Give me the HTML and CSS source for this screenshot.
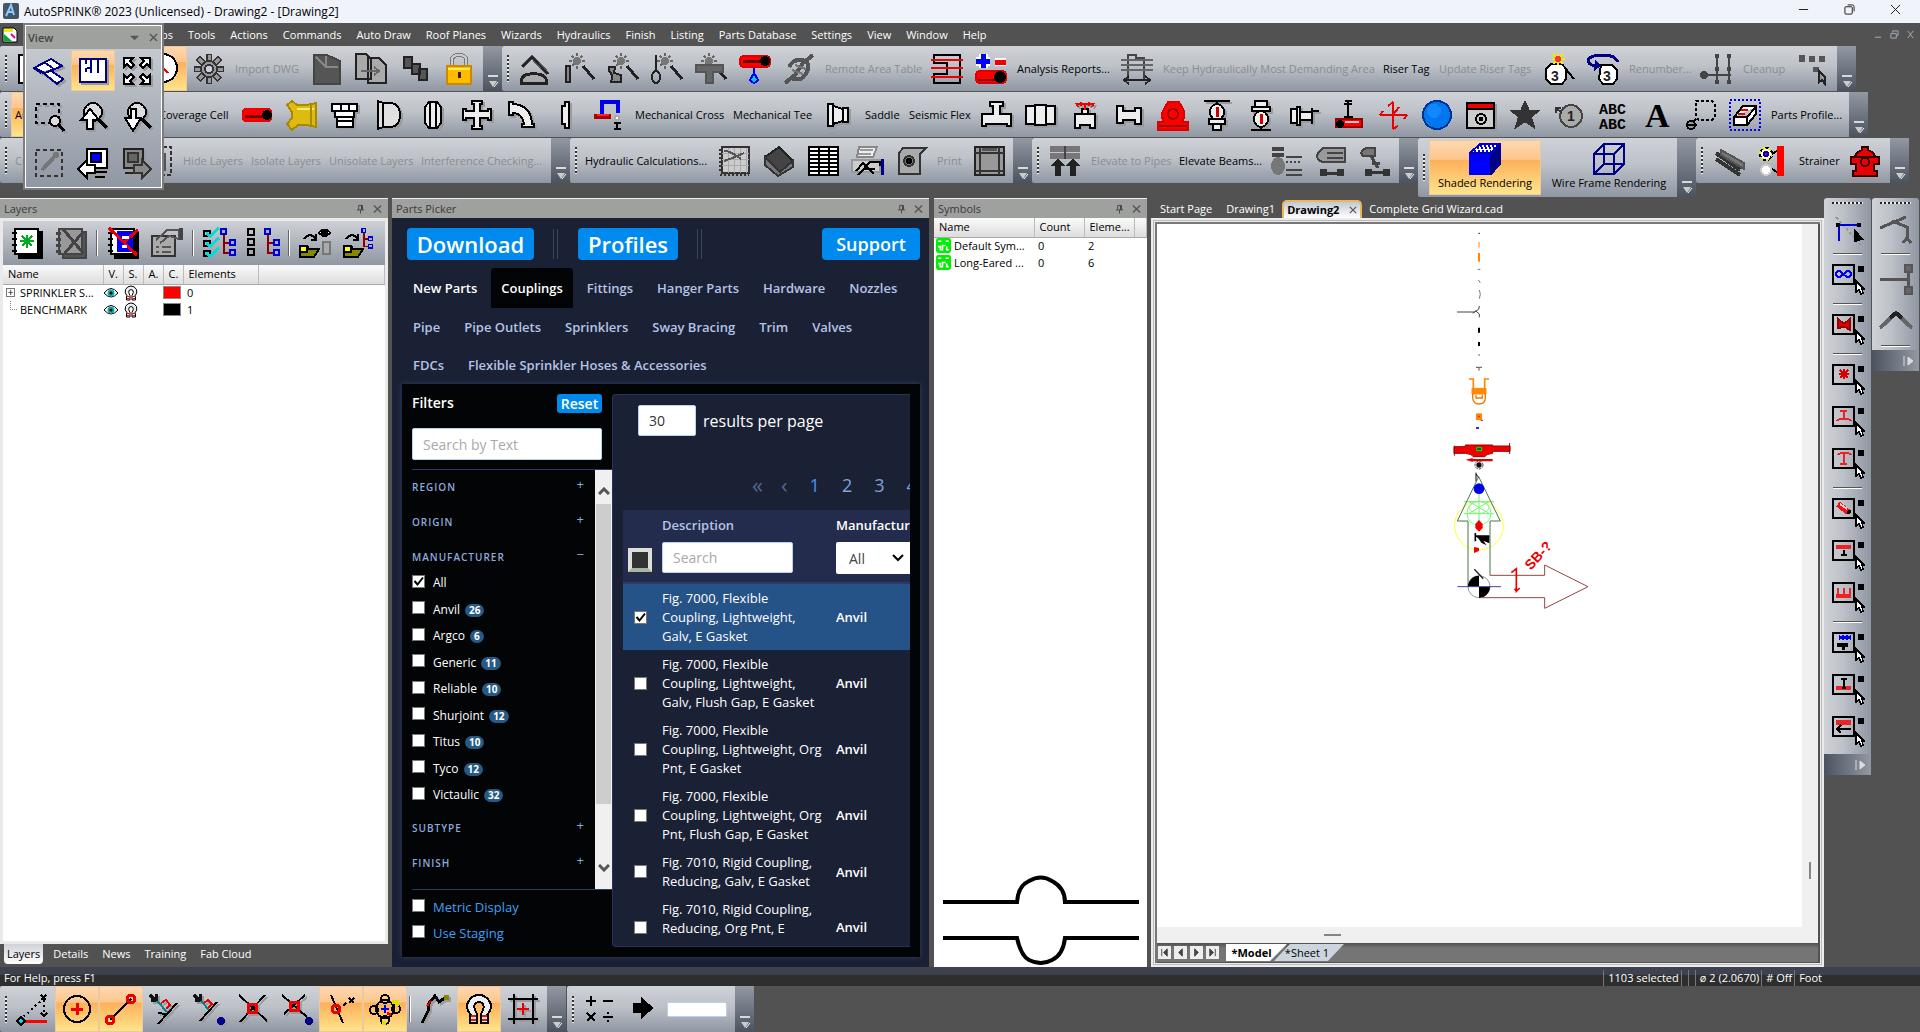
FILE: index.html
```html
<!DOCTYPE html>
<html lang="en">
<head>
<meta charset="utf-8">
<title>AutoSPRINK 2023 - Drawing2</title>
<link rel="stylesheet" href="styles.css">
</head>
<body>
<svg class="defs" aria-hidden="true">
  <symbol id="pin" viewBox="0 0 10 10"><path d="M3 1H7V6M3 1V6M1 6H9M5 6V10" fill="none" stroke="#444"/><path d="M6.5 1V6" stroke="#444" stroke-width="2"/></symbol>
  <symbol id="x" viewBox="0 0 10 10"><path d="M1 1L9 9M9 1L1 9" fill="none" stroke="#555" stroke-width="1.5"/></symbol>
  <symbol id="more" viewBox="0 0 12 14"><path d="M1 1H11" stroke="#fff" stroke-width="1.5"/><path d="M2 6H10L6 12Z" fill="#ccc"/><path d="M7 12L11 7" stroke="#fff"/></symbol>
  <symbol id="wand" viewBox="0 0 32 32"><g fill="none" stroke="#666"><circle cx="14" cy="8" r="4" fill="#777" stroke="none"/><path d="M14 0V3M14 13V16M6 8H9M19 8H22M9 3L11 5M19 3L17 5M9 13L11 11"/><path d="M20 13L31 26" stroke="#222" stroke-width="3"/></g></symbol>
  <symbol id="pick" viewBox="0 0 34 32"><path d="M2 2H23V21H2Z" fill="none" stroke="#000" stroke-width="2"/><path d="M27 3H33V9H27Z" fill="#000" stroke="none"/><path d="M25 18V29L28 27L30 31L32 30L31 26H33Z" fill="#fff" stroke="#000" stroke-width="1.5"/></symbol>
  <symbol id="eye" viewBox="0 0 16 12"><path d="M1 6Q8-3 15 6Q8 14 1 6Z" fill="#fff" stroke="#000"/><circle cx="8" cy="6" r="3.5" fill="#1aa"/><circle cx="8" cy="6" r="1.5"/></symbol>
  <symbol id="magnet" viewBox="0 0 32 32"><path d="M7 30V23H9Q2 16 5 9Q9 2 16 2Q23 2 27 9Q30 16 23 23H25V30H18V21Q22 15 20 11Q16 7 12 11Q10 15 14 21V30Z" fill="#eee" stroke="#000" stroke-width="2"/><path d="M8 23H13M19 23H24M8 27H13M19 27H24" stroke="#e11" stroke-width="2"/></symbol>
  <symbol id="tree" viewBox="0 0 16 32"><path d="M4 5V26H11M4 16H11" fill="none" stroke="#800" stroke-width="2"/><path d="M1 2H6V7H1ZM10 13H15V18H10ZM10 23H15V28H10Z" fill="#aaf" stroke="#00c" stroke-width="2"/></symbol>
  <symbol id="sym" viewBox="0 0 14 14"><rect width="14" height="14" rx="2" fill="#0e0"/><path d="M2 3H5M9 3H12M2 8H4V11H6V7H9M10 8V11H12" stroke="#fff" stroke-width="1.5" fill="none"/></symbol>
</svg>

<header class="titlebar">
  <svg class="appicon" viewBox="0 0 16 16"><rect width="16" height="16" rx="2" fill="#456"/><path d="M3 13L8 2L11 12M5 9H10" stroke="#8cf" stroke-width="2" fill="none"/></svg>
  <h1>AutoSPRINK® 2023 (Unlicensed) - Drawing2 - [Drawing2]</h1>
  <div class="winctl">
    <button aria-label="Minimize"><svg viewBox="0 0 12 12"><path d="M1 6H11"/></svg></button>
    <button aria-label="Restore"><svg viewBox="0 0 12 12"><rect x="1" y="3" width="8" height="8" rx="1"/><path d="M4 1H9Q11 1 11 3V8"/></svg></button>
    <button aria-label="Close"><svg viewBox="0 0 12 12"><path d="M1 1L11 11M11 1L1 11"/></svg></button>
  </div>
</header>

<nav class="menubar">
  <svg class="appicon" viewBox="0 0 16 16"><path d="M1 1H12L15 4V15H1Z" fill="#fff" stroke="#000"/><path d="M2 2H11V5H2Z" fill="#ee0"/><path d="M2 7V14H10Z" fill="#0a3"/><path d="M9 7L13 11" stroke="#d0a" stroke-width="2"/></svg>
  <button class="tucked">Snaps</button>
  <button>Tools</button><button>Actions</button><button>Commands</button><button>Auto Draw</button><button>Roof Planes</button><button>Wizards</button><button>Hydraulics</button><button>Finish</button><button>Listing</button><button>Parts Database</button><button>Settings</button><button>View</button><button>Window</button><button>Help</button>
  <div class="mdictl">
    <button aria-label="Minimize drawing"><svg viewBox="0 0 10 10"><path d="M1 8H8"/></svg></button>
    <button aria-label="Restore drawing"><svg viewBox="0 0 10 10"><path d="M1 4H7V9H1ZM3 3V1H9V6H8"/></svg></button>
    <button aria-label="Close drawing"><svg viewBox="0 0 10 10"><path d="M2 1L8 9M8 1L2 9"/></svg></button>
  </div>
</nav>

<section class="bars">
 <div class="barrow">
  <div class="bar"><i class="grip"></i>
   <button class="ib" aria-label="New"><svg viewBox="0 0 32 32"><path d="M2 2H28V30H2Z" fill="#fff"/></svg></button>
   <button class="ib" aria-label="Open"><svg viewBox="0 0 32 32"><path d="M2 8H28V28H2Z"/></svg></button>
   <button class="ib" aria-label="Save"><svg viewBox="0 0 32 32"><path d="M2 2H28V30H2Z"/></svg></button>
   <button class="ib on" aria-label="Angle"><svg viewBox="0 0 32 32"><circle cx="14" cy="15" r="14" fill="#fff"/><path d="M8 8L19 20" stroke="#e00"/></svg></button>
   <button class="ib" aria-label="Options"><svg viewBox="0 0 32 32"><g stroke="#333" stroke-width="6"><path d="M16 1V31M1 16H31M5 5L27 27M27 5L5 27"/></g><g stroke="#999" stroke-width="3"><path d="M16 2V30M2 16H30M6 6L26 26M26 6L6 26"/></g><circle cx="16" cy="16" r="8" fill="#999" stroke="#333"/><circle cx="16" cy="16" r="4" fill="#ccd" stroke="#333"/></svg></button>
   <button class="tx off w-74" disabled>Import DWG</button>
   <button class="ib" aria-label="Import"><svg viewBox="0 0 32 32"><path d="M3 2H16L29 8V31H3Z" fill="#555" stroke="#444"/><path d="M5 4L15 14L27 14M15 3V14" stroke="#888"/></svg></button>
   <button class="ib" aria-label="Copy"><svg viewBox="0 0 32 32"><path d="M1 1H11L16 6V26H1ZM13 5H24L31 12V30H13Z" fill="#aaa" stroke="#222"/><path d="M6 18H24M19 14L24 18L19 22" stroke="#666"/></svg></button>
   <button class="ib" aria-label="Cascade"><svg viewBox="0 0 32 32"><path d="M5 4H13V15H5ZM13 11H21V21H13ZM20 16H28V27H20Z" fill="#555" stroke="#222"/></svg></button>
   <button class="ib" aria-label="Lock"><svg viewBox="0 0 32 32"><path d="M9 14V7Q9 2 16 2Q23 2 23 7V14" stroke="#777" stroke-width="4"/><path d="M9 14V7Q9 2 16 2Q23 2 23 7V14" stroke="#ccc"/><rect x="4" y="13" width="24" height="18" fill="#fb0" stroke="#c80"/><path d="M5 16H27" stroke="#fe4"/><path d="M16 19V25" stroke="#320" stroke-width="3"/></svg></button>
   <button class="cap" aria-label="More"><svg><use href="#more"/></svg></button></div>
  <div class="bar"><i class="grip"></i>
   <button class="ib" aria-label="Spool"><svg viewBox="0 0 32 32"><path d="M3 14L13 4L29 21" stroke="#555" stroke-width="4"/><path d="M3 14L13 4L29 21" stroke="#222"/><path d="M2 30V27Q5 20 14 21Q24 20 27 26V30Z" fill="#aaa" stroke="#222" stroke-width="3"/></svg></button>
   <button class="ib" aria-label="Coupling wizard"><svg viewBox="0 0 32 32"><use href="#wand"/><path d="M3 13H7V29H3Z" fill="#888" stroke="#222"/></svg></button>
   <button class="ib" aria-label="Elbow wizard"><svg viewBox="0 0 32 32"><use href="#wand"/><path d="M2 14H8L7 20L14 22V29H4Q7 22 2 18Z" fill="#888" stroke="#222"/></svg></button>
   <button class="ib" aria-label="Hanger wizard"><svg viewBox="0 0 32 32"><use href="#wand"/><path d="M5 2V18" stroke="#222"/><ellipse cx="5" cy="24" rx="4" ry="6" stroke="#222"/></svg></button>
   <button class="ib" aria-label="Tee wizard"><svg viewBox="0 0 32 32"><use href="#wand"/><path d="M1 12H28V19H18V30H11V19H1Z" fill="#666" stroke="#555"/></svg></button>
   <button class="ib" aria-label="Drain pipe"><svg viewBox="0 0 32 32"><rect x="1" y="3" width="30" height="11" rx="4" fill="#f00" stroke="#d00"/><path d="M4 8H24" stroke="#600" stroke-width="3"/><circle cx="26" cy="8" r="4" fill="#000"/><path d="M15 15V20" stroke="#00f"/><path d="M15 20L19 27Q15 33 11 27Z" fill="#0cf" stroke="#00f"/></svg></button>
   <button class="ib" aria-label="Remote area"><svg viewBox="0 0 32 32"><path d="M2 30L12 22L20 10L30 2M6 14Q12 3 24 9Q28 18 18 26L9 26" stroke="#555" stroke-width="4"/><path d="M9 17L20 21M12 12L23 16" stroke="#777"/></svg></button>
   <button class="tx off w-104" disabled>Remote Area Table</button>
   <button class="ib" aria-label="Grid"><svg viewBox="0 0 32 32"><path d="M3 2H29V30H3V21H16V10H3Z"/><path d="M0 7H32M0 15H32M0 24H32" stroke="#e00"/></svg></button>
   <button class="ib" aria-label="Add and remove pipe"><svg viewBox="0 0 32 32"><path d="M8 1V15M1 8H15" stroke="#fff" stroke-width="9"/><path d="M8 1V15M1 8H15" stroke="#00f" stroke-width="5"/><path d="M20 9H31" stroke="#fff" stroke-width="8"/><path d="M20 9H31" stroke="#e00" stroke-width="5"/><rect x="1" y="18" width="30" height="12" rx="4" fill="#f00" stroke="#d00"/><path d="M3 27H22" stroke="#700"/><circle cx="25" cy="24" r="5" fill="#000"/></svg></button>
   <button class="tx w-102">Analysis Reports...</button>
   <button class="ib" aria-label="Demand area"><svg viewBox="0 0 32 32"><g stroke="#444"><path d="M7 1V28M23 5V28M7 2H15V5H24"/><path d="M0 7H32M0 12H32M0 17H32" stroke="#666"/><path d="M3 27H29M8 23L3 27L8 31M24 23L29 27L24 31" stroke="#222"/></g></svg></button>
   <button class="tx off w-220" disabled>Keep Hydraulically Most Demanding Area</button>
   <button class="tx w-56">Riser Tag</button>
   <button class="tx off w-102" disabled>Update Riser Tags</button>
   <button class="ib" aria-label="Number tag"><svg viewBox="0 0 32 32"><path d="M8 11H19L23 16V26L19 31H8L3 26V16Z" fill="#fff"/><text x="8" y="28" class="icot">3</text><path d="M15 0V12M9 6H22M10 1L20 11M20 1L10 11" stroke="#ee0"/><circle cx="15" cy="6" r="3" fill="#f33" stroke="none"/><path d="M22 15L31 26" /></svg></button>
   <button class="ib" aria-label="Repeat tag"><svg viewBox="0 0 32 32"><path d="M14 12H25L30 17V26L26 31H16L12 26Z" fill="#fff"/><text x="16" y="28" class="icot">3</text><path d="M31 9Q28 2 16 2Q2 2 1 8Q2 13 12 13" stroke="#008" stroke-width="3"/><path d="M8 7L14 13L7 18Z" fill="#008" stroke="none"/></svg></button>
   <button class="tx off w-70" disabled>Renumber...</button>
   <button class="ib" aria-label="Nodes"><svg viewBox="0 0 32 32"><g stroke="#444" stroke-width="1.5"><path d="M16 3V29M28 3V29M3 22H30"/><circle cx="3" cy="22" r="3" fill="#444"/><path d="M14 3H18M26 3H30M14 16H18M26 16H30M14 29H18M26 29H30" stroke-width="4"/></g></svg></button>
   <button class="tx off w-52" disabled>Cleanup</button>
   <button class="ib" aria-label="Filter selection"><svg viewBox="0 0 32 32"><g fill="#555" stroke="none"><path d="M2 2H8V9H2ZM12 3H18V9H12ZM22 3H28V9H22ZM16 14H22V19H16Z"/></g><path d="M22 18V29L25 27L28 31V24Z" fill="#999" stroke="#222"/></svg></button>
   <button class="cap" aria-label="More"><svg><use href="#more"/></svg></button></div>
 </div>

 <div class="barrow">
  <div class="bar"><i class="grip"></i>
   <button class="tx on w-144">Auto Coverage</button>
   <button class="tx w-80">Coverage Cell</button>
   <button class="ib" aria-label="Pipe"><svg viewBox="0 0 32 32"><rect x="2" y="10" width="28" height="12" rx="3" fill="#f00" stroke="#e00"/><path d="M4 17H24" stroke="#700" stroke-width="3"/><circle cx="26" cy="16" r="4" fill="#000"/></svg></button>
   <button class="ib" aria-label="Fitting"><svg viewBox="0 0 32 32"><path d="M2 6L7 2L12 6H22L31 4V28L22 26H13L7 31L2 25L7 19V13Z" fill="#db1" stroke="#a80"/><path d="M12 10H29" stroke="#fe6"/><path d="M26 5V27" stroke="#a80"/></svg></button>
   <button class="ib s" aria-label="Adapter"><svg viewBox="0 0 32 32"><path d="M3 5H28V12H3ZM6 12H25V18H6ZM8 18H24V28H8ZM12 5V12M20 5V12M8 22H24" fill="#fff"/></svg></button>
   <button class="ib s" aria-label="Cap"><svg viewBox="0 0 32 32"><path d="M5 2V30L10 28H19Q27 26 27 16Q27 6 19 4H10ZM10 4V28" fill="#e0e0e0"/></svg></button>
   <button class="ib s" aria-label="Coupling"><svg viewBox="0 0 32 32"><path d="M12 3H20L24 8V24L20 29H12L8 24V8ZM13 4V28M19 4V28" fill="#eee"/></svg></button>
   <button class="ib s" aria-label="Cross"><svg viewBox="0 0 32 32"><path d="M11 2H21V5H19V12H27V10H30V21H27V19H19V27H21V30H11V27H13V19H5V21H2V10H5V12H13V5H11Z" fill="#eee"/></svg></button>
   <button class="ib s" aria-label="Elbow"><svg viewBox="0 0 32 32"><path d="M4 3H8V5Q26 6 27 25H29V28H17V25H19Q17 14 8 14V16H4Z" fill="#eee"/></svg></button>
   <button class="ib s" aria-label="Flange"><svg viewBox="0 0 32 32"><path d="M16 3H20V29H16V25H13V7H16Z" fill="#eee"/></svg></button>
   <button class="ib" aria-label="Flexible drop"><svg viewBox="0 0 32 32"><path d="M9 16V3H25V14" stroke="#00e" stroke-width="4"/><path d="M1 17H18" stroke="#a00" stroke-width="5"/><path d="M4 16H16" stroke="#f22"/><circle cx="24" cy="19" r="2" fill="#fff" stroke="#aaa"/><path d="M21 30H28M24 23V30M21 24H28"/></svg></button>
   <button class="tx w-98">Mechanical Cross</button><button class="tx w-88">Mechanical Tee</button>
   <button class="ib s" aria-label="Reducer"><svg viewBox="0 0 32 32"><path d="M5 5H10V27H5ZM10 7L20 10V22L10 25ZM20 9H25V23H20Z" fill="#eee"/></svg></button>
   <button class="tx w-44">Saddle</button><button class="tx w-70">Seismic Flex</button>
   <button class="ib s" aria-label="Tee"><svg viewBox="0 0 32 32"><path d="M9 3H22V7H19V15H30V27H26V25H5V27H1V15H12V7H9Z" fill="#eee"/></svg></button>
   <button class="ib s" aria-label="Union"><svg viewBox="0 0 32 32"><path d="M1 7H10V25H1ZM10 6H21V26H10ZM21 7H30V25H21Z" fill="#eee"/></svg></button>
   <button class="ib s" aria-label="Valve"><svg viewBox="0 0 32 32"><path d="M6 15H26V29H21V26H11V29H6ZM13 10H19V15H13Z" fill="#eee"/><path d="M7 5H25M16 5V11" stroke="#e00"/><path d="M7 4L9 8M12 3V7M20 3V7M25 4L23 8" stroke="#e00"/></svg></button>
   <button class="ib s" aria-label="Nipple"><svg viewBox="0 0 32 32"><path d="M4 7H10V12H22V9H28V25H22V21H10V24H4Z" fill="#eee"/></svg></button>
   <button class="ib" aria-label="Pump"><svg viewBox="0 0 32 32"><path d="M11 3H22L26 10Q29 16 25 23H31V31H1V23H7Q3 16 7 10Z" fill="#f00" stroke="#d00"/><circle cx="16" cy="15" r="5" stroke="#900"/><path d="M2 27H30" stroke="#900"/></svg></button>
   <button class="ib s" aria-label="Upright sprinkler"><svg viewBox="0 0 32 32"><path d="M3 2H29M16 2V6"/><ellipse cx="16" cy="13" rx="7" ry="8" fill="#eee"/><path d="M16 8V18" stroke="#c00" stroke-width="3"/><path d="M8 20H24V25H8ZM12 25H20V31H12Z" fill="#eee"/></svg></button>
   <button class="ib s" aria-label="Pendent sprinkler"><svg viewBox="0 0 32 32"><path d="M10 2H22V8H10ZM7 8H25V12H7Z" fill="#eee"/><ellipse cx="16" cy="20" rx="7" ry="8" fill="#eee"/><path d="M16 15V25" stroke="#c00" stroke-width="3"/><path d="M6 31H26M16 28V31"/></svg></button>
   <button class="ib s" aria-label="Sidewall sprinkler"><svg viewBox="0 0 32 32"><path d="M2 10H8V24H2ZM8 8H11V26H8ZM11 13H23V21H11ZM23 9V25M23 12H30" fill="#eee"/></svg></button>
   <button class="ib" aria-label="Hanger"><svg viewBox="0 0 32 32"><path d="M12 2H19M15 2V17"/><path d="M11 5H19"/><path d="M3 20H29V28H3Z" fill="#f00" stroke="#900"/><path d="M12 23H26" stroke="#fcc"/><path d="M11 18H20"/><circle cx="7" cy="25" r="3" fill="#000"/></svg></button>
   <button class="ib" aria-label="Gridlines"><svg viewBox="0 0 32 32"><path d="M16 3V30M3 16H30M11 7L16 3M21 27L16 30M6 12L3 16M27 20L30 16M16 16L22 8" stroke="#e00"/></svg></button>
   <button class="ib" aria-label="Sphere"><svg viewBox="0 0 32 32"><circle cx="16" cy="16" r="14" fill="#07e" stroke="#039"/><circle cx="13" cy="12" r="7" fill="#18f" stroke="none"/></svg></button>
   <button class="ib s" aria-label="Title block"><svg viewBox="0 0 32 32"><path d="M2 4H29V29H2Z" fill="#ccc"/><path d="M3 7H28" stroke="#e00" stroke-width="5"/><path d="M2 10H29"/><circle cx="16" cy="20" r="5"/><circle cx="16" cy="20" r="1.5" fill="#000"/></svg></button>
   <button class="ib" aria-label="Star"><svg viewBox="0 0 32 32"><path d="M16 3L20 12H29L22 18L25 28L16 22L7 28L10 18L3 12H12Z" fill="#333" stroke="#333"/></svg></button>
   <button class="ib" aria-label="Callout"><svg viewBox="0 0 32 32"><circle cx="18" cy="17" r="11" fill="#aaa" stroke="#444"/><text x="14" y="22" class="icot">1</text><path d="M2 9H8M3 8V14M3 9L9 14" stroke="#333"/></svg></button>
   <button class="ib" aria-label="Text"><svg viewBox="0 0 32 32"><text x="2" y="15" class="icom">ABC</text><text x="2" y="30" class="icom">ABC</text></svg></button>
   <button class="ib" aria-label="Letter"><svg viewBox="0 0 32 32"><text x="4" y="28" class="icoa">A</text></svg></button>
   <button class="ib" aria-label="Tag area"><svg viewBox="0 0 32 32"><path d="M11 2H27L30 6V18L27 21H14L11 18Z" stroke-dasharray="3 2"/><path d="M11 20L7 24" /><circle cx="6" cy="26" r="4" fill="#999"/><path d="M1 26H12"/></svg></button>
   <button class="ib" aria-label="Box"><svg viewBox="0 0 32 32"><path d="M1 1H31V31H1Z" stroke="#00e" stroke-dasharray="2 2"/><path d="M5 18L14 7H27V15L18 26H5ZM5 18H18L27 8M18 18V26" fill="#fff"/><path d="M12 11H19M9 15H16" stroke="#e00"/></svg></button>
   <button class="tx w-82">Parts Profile...</button>
   <button class="cap" aria-label="More"><svg><use href="#more"/></svg></button></div>
 </div>

 <div class="barrow">
  <div class="bar"><i class="grip"></i>
   <button class="tx off w-124" disabled>Create Layer</button>
   <button class="ib" aria-label="Layer selection"><svg viewBox="0 0 32 32"><path d="M4 2H30V30H4Z" stroke="#333" stroke-dasharray="4 2"/><path d="M14 8V26M22 8V26" stroke="#555" stroke-width="5"/></svg></button>
   <button class="tx off w-68" disabled>Hide Layers</button><button class="tx off w-78" disabled>Isolate Layers</button><button class="tx off w-92" disabled>Unisolate Layers</button><button class="tx off w-134" disabled>Interference Checking...</button>
   <button class="cap" aria-label="More"><svg><use href="#more"/></svg></button></div>
  <div class="bar"><i class="grip"></i>
   <button class="tx w-132">Hydraulic Calculations...</button>
   <button class="ib" aria-label="Graph"><svg viewBox="0 0 32 32"><path d="M3 2H30V28H3Z" fill="#ccc" stroke="#333"/><path d="M9 3V28M15 3V28M21 3V28M27 3V28M3 8H30M3 14H30M3 20H30" stroke="#aaa" stroke-width="1"/><path d="M5 6Q12 6 22 14M5 16L16 12L25 8" stroke="#555"/><path d="M1 30H30M1 4V28" stroke="#333" stroke-dasharray="2 2"/></svg></button>
   <button class="ib" aria-label="Book"><svg viewBox="0 0 32 32"><path d="M2 12L16 2L30 16L17 29Z" fill="#444" stroke="#222"/><path d="M2 12V20L15 31L30 22V16L17 27Z" fill="#777" stroke="#333"/></svg></button>
   <button class="ib" aria-label="Table"><svg viewBox="0 0 32 32"><path d="M2 2H31V30H2Z" fill="#fff"/><path d="M2 6H31M2 10H31M2 14H31M2 18H31M2 22H31M2 26H31M12 2V30M22 2V30"/></svg></button>
   <button class="ib" aria-label="Preview"><svg viewBox="0 0 32 32"><path d="M8 2H26L22 12H6Z" fill="#eee" stroke="#888"/><path d="M1 15H29V27H1Z" fill="#ccc" stroke="#999"/><path d="M9 5H22M8 9H20" stroke="#999"/><path d="M5 26L12 18L23 29M7 30L19 17H29V21M12 24H24" /><path d="M31 14V30" stroke="#008" stroke-width="3"/></svg></button>
   <button class="ib" aria-label="Sheet"><svg viewBox="0 0 32 32"><path d="M8 3H31L25 9V29H4V8Z" fill="#aaa" stroke="#333"/><circle cx="14" cy="16" r="5" fill="#777" stroke="#333"/><circle cx="14" cy="16" r="2" fill="#111"/></svg></button>
   <button class="tx off w-34" disabled>Print</button>
   <button class="ib" aria-label="Layout"><svg viewBox="0 0 32 32"><path d="M2 2H31V30H2Z" fill="#999" stroke="#222"/><path d="M2 8H31M2 26H31M7 2V30M26 2V30" stroke="#333"/><path d="M9 4H24" stroke="#555" stroke-width="3"/></svg></button>
   <button class="cap" aria-label="More"><svg><use href="#more"/></svg></button></div>
  <div class="bar"><i class="grip"></i>
   <button class="ib" aria-label="Elevate"><svg viewBox="0 0 32 32"><path d="M1 4H31M1 11H31" stroke="#777" stroke-width="6"/><path d="M16 1V14" stroke="#444"/><path d="M9 31V20M24 31V20" stroke="#222" stroke-width="6"/><path d="M2 21L9 13L16 21ZM17 21L24 13L31 21Z" fill="#222" stroke="none"/></svg></button>
   <button class="tx off w-88" disabled>Elevate to Pipes</button><button class="tx w-90">Elevate Beams...</button>
   <button class="ib" aria-label="Beam"><svg viewBox="0 0 32 32"><path d="M1 4H13M1 10H13" stroke="#444" stroke-width="4"/><ellipse cx="7" cy="21" rx="6" ry="8" fill="#777" stroke="#777"/><path d="M15 12H31M15 25H31M15 30H31" stroke="#444"/><path d="M15 17H31" stroke="#444" stroke-dasharray="2 2"/></svg></button>
   <button class="ib" aria-label="Attach"><svg viewBox="0 0 32 32"><path d="M8 3H30V17H8Q0 15 3 8ZM12 8H28M12 13H28" fill="#999" stroke="#444"/><path d="M6 28H26" stroke="#333" stroke-width="3"/><path d="M5 24H12V31H5ZM22 24H29V31H22Z" fill="#333" stroke="none"/></svg></button>
   <button class="ib" aria-label="Lower"><svg viewBox="0 0 32 32"><path d="M2 8Q4 2 12 3H16V11H4Z" fill="#777" stroke="#444"/><path d="M12 11L19 23M13 18L21 18" stroke="#444" stroke-width="3"/><path d="M8 27H30" stroke="#333" stroke-width="3"/><path d="M6 24H13V31H6ZM24 24H31V31H24Z" fill="#333" stroke="none"/></svg></button>
   <button class="cap" aria-label="More"><svg><use href="#more"/></svg></button></div>
  <div class="bar tall"><i class="grip"></i>
   <button class="stack on w-112"><svg viewBox="0 0 32 32"><path d="M1 11H22V31H1Z" fill="#00f" stroke="#00f"/><path d="M22 11L31 1V21L22 31Z" fill="#008" stroke="#008"/><path d="M1 10L11 1H31L22 10Z" fill="#fff" stroke="#00c"/><path d="M5 8H22M8 5H26M11 3H29" stroke="#00c" stroke-dasharray="2 2"/></svg><span>Shaded Rendering</span></button>
   <button class="stack w-136"><svg viewBox="0 0 32 32"><path d="M1 11H21V31H1ZM11 1H31V21H11ZM1 11L11 1M21 11L31 1M1 31L11 21M21 31L31 21" stroke="#008"/></svg><span>Wire Frame Rendering</span></button>
   <button class="cap" aria-label="More"><svg><use href="#more"/></svg></button></div>
  <div class="bar"><i class="grip"></i>
   <button class="ib" aria-label="Steel"><svg viewBox="0 0 32 32"><path d="M3 8L27 25M3 14L27 30" stroke="#333" stroke-width="4"/><path d="M8 5L31 18V24L8 10Z" fill="#777" stroke="#555"/></svg></button>
   <button class="ib" aria-label="Bell"><svg viewBox="0 0 32 32"><circle cx="9" cy="9" r="6" fill="#fff" stroke="#000"/><circle cx="9" cy="9" r="6" stroke="#ee0" stroke-dasharray="3 3"/><circle cx="9" cy="9" r="2" fill="#e00" stroke="#00c"/><path d="M15 9L20 6M15 24L20 27" /><circle cx="9" cy="25" r="5" fill="#fff" stroke="#ccc"/><path d="M23 1V31" stroke="#f00" stroke-width="7"/></svg></button>
   <button class="tx w-48">Strainer</button>
   <button class="ib" aria-label="Hydrant"><svg viewBox="0 0 32 32"><path d="M13 2H19V5Q25 7 26 12H30V19H25V26H28V31H4V26H7V19H2V12H6Q7 7 13 5Z" fill="#e00" stroke="#300"/><circle cx="16" cy="17" r="4" stroke="#300"/><path d="M6 12H26" stroke="#300"/></svg></button>
   <button class="cap wide" aria-label="More"><svg><use href="#more"/></svg></button></div>
 </div>
</section>

<main class="work">
 <section class="leftdock">
  <div class="panel layers">
   <div class="phead"><span>Layers</span><svg><use href="#pin"/></svg><svg><use href="#x"/></svg></div>
   <div class="pbody">
    <div class="ltools">
     <button aria-label="New layer"><svg viewBox="0 0 32 32"><path d="M8 5H31V31H8Z" fill="#000"/><path d="M4 2H27V27H4Z" fill="#fff"/><path d="M1 6H6M1 12H6M1 18H6M1 24H6" /><path d="M16 8V21M9 14H23M11 9L21 19M21 9L11 19" stroke="#0a2"/></svg></button>
     <button aria-label="Delete layer"><svg viewBox="0 0 32 32"><path d="M8 5H31V31H8Z" fill="#555" stroke="#444"/><path d="M4 2H27V27H4Z" fill="#999" stroke="#444"/><path d="M1 6H6M1 12H6M1 18H6M1 24H6M8 2L28 26M29 4L10 26" stroke="#444" stroke-width="3"/></svg></button>
     <i class="vs"></i>
     <button aria-label="Delete empty layers"><svg viewBox="0 0 32 32"><path d="M8 5H31V31H8Z" fill="#000"/><path d="M4 2H27V27H4Z" fill="#fff"/><path d="M1 6H6M1 12H6M1 18H6M1 24H6"/><path d="M10 4H26V25H10Z" fill="#00f" stroke="none"/><path d="M2 1L30 28M31 3L17 15" stroke="#e00" stroke-width="3"/><path d="M15 10H22M15 19H20" stroke="#fff" stroke-width="3"/></svg></button>
     <button aria-label="Layer properties"><svg viewBox="0 0 32 32"><path d="M1 9H24V29H1Z" fill="#aaa" stroke="#333"/><path d="M5 13L13 6L16 3H28V12L18 9L9 16M5 20H8M11 20H20M5 25H8M11 25H20" stroke="#555"/><path d="M30 1V13" stroke="#444" stroke-width="4"/></svg></button>
     <i class="vs"></i>
     <button aria-label="Check all"><svg viewBox="0 0 32 32"><path d="M1 4H7V9H1ZM1 14H7V19H1ZM1 24H7V29H1Z"/><path d="M3 6L7 9L16 1M3 16L7 19L16 11M3 26L7 29L16 21" stroke="#0dd" stroke-width="3"/><use href="#tree" x="17" width="16" height="32"/></svg></button>
     <button aria-label="Uncheck all"><svg viewBox="0 0 32 32"><path d="M1 2H7V8H1ZM1 12H7V18H1ZM1 22H7V28H1Z"/><use href="#tree" x="17" width="16" height="32"/></svg></button>
     <i class="vs"></i>
     <button aria-label="Load view"><svg viewBox="0 0 32 32"><path d="M5 12Q11 4 17 12M17 7V13H12"/><path d="M1 19H8L10 22H20L15 30H1Z" fill="#880"/><path d="M1 19L8 19V25H1Z" fill="#ff0"/><use href="#eye" x="19" y="1" width="13" height="10"/><path d="M24 15H31V27H24Z" fill="#aaa" stroke="#777"/></svg></button>
     <button aria-label="Load tree"><svg viewBox="0 0 32 32"><path d="M3 12Q9 4 15 12M15 7V13H10"/><path d="M1 19H8L10 22H20L15 30H1Z" fill="#880"/><path d="M1 19L8 19V25H1Z" fill="#ff0"/><use href="#tree" x="17" y="0" width="14" height="24"/></svg></button>
    </div>
    <table class="list">
     <colgroup><col class="c100"><col class="c20"><col class="c20"><col class="c20"><col class="c20"><col class="c75"><col></colgroup>
     <thead><tr><th>Name</th><th>V.</th><th>S.</th><th>A.</th><th>C.</th><th>Elements</th><th></th></tr></thead>
     <tbody>
      <tr><td><span class="node"><i class="plus">+</i>SPRINKLER S...</span></td><td><svg class="e"><use href="#eye"/></svg></td><td><svg class="m"><use href="#magnet"/></svg></td><td></td><td><i class="sw red"></i></td><td>0</td><td></td></tr>
      <tr><td><span class="node"><i class="leaf"></i>BENCHMARK</span></td><td><svg class="e"><use href="#eye"/></svg></td><td><svg class="m"><use href="#magnet"/></svg></td><td></td><td><i class="sw"></i></td><td>1</td><td></td></tr>
     </tbody>
    </table>
   </div>
  </div>
  <div class="ptabs"><button class="cur">Layers</button><button>Details</button><button>News</button><button>Training</button><button>Fab Cloud</button></div>
 </section>

 <section class="picker">
  <div class="phead"><span>Parts Picker</span><svg><use href="#pin"/></svg><svg><use href="#x"/></svg></div>
  <div class="pk">
   <div class="pktop"><button class="big w-127">Download</button><i class="dbl"></i><button class="big w-100">Profiles</button><i class="dbl"></i><button class="big sup w-98">Support</button></div>
   <nav class="cats">
    <div><a href="#" class="new">New Parts</a><a href="#" class="cur">Couplings</a><a href="#">Fittings</a><a href="#">Hanger Parts</a><a href="#">Hardware</a><a href="#">Nozzles</a></div>
    <div><a href="#">Pipe</a><a href="#">Pipe Outlets</a><a href="#">Sprinklers</a><a href="#">Sway Bracing</a><a href="#">Trim</a><a href="#">Valves</a></div>
    <div><a href="#">FDCs</a><a href="#">Flexible Sprinkler Hoses &amp; Accessories</a></div>
   </nav>
   <div class="box">
    <aside class="filters">
     <div class="fh"><h2>Filters</h2><button class="reset">Reset</button></div>
     <input class="ftext" type="text" placeholder="Search by Text" aria-label="Search by Text">
     <div class="fscroll">
      <div class="fl">
       <button class="grp">REGION<span>+</span></button>
       <button class="grp">ORIGIN<span>+</span></button>
       <button class="grp">MANUFACTURER<span>−</span></button>
       <div class="mf">
        <label><input type="checkbox" checked>All</label>
        <label><input type="checkbox">Anvil<b>26</b></label>
        <label><input type="checkbox">Argco<b>6</b></label>
        <label><input type="checkbox">Generic<b>11</b></label>
        <label><input type="checkbox">Reliable<b>10</b></label>
        <label><input type="checkbox">Shurjoint<b>12</b></label>
        <label><input type="checkbox">Titus<b>10</b></label>
        <label><input type="checkbox">Tyco<b>12</b></label>
        <label><input type="checkbox">Victaulic<b>32</b></label>
       </div>
       <button class="grp">SUBTYPE<span>+</span></button>
       <button class="grp">FINISH<span>+</span></button>
      </div>
      <div class="sb"><svg viewBox="0 0 12 8"><path d="M1 7L6 2L11 7"/></svg><i></i><svg viewBox="0 0 12 8"><path d="M1 1L6 6L11 1"/></svg></div>
     </div>
     <div class="ff"><label><input type="checkbox">Metric Display</label><label><input type="checkbox">Use Staging</label></div>
    </aside>
    <section class="results"><div class="clip">
     <div class="rpp"><input id="rpp" type="text" value="30"><label for="rpp">results per page</label></div>
     <div class="pages"><a href="#" class="dim">«</a><a href="#" class="dim">‹</a><a href="#" class="cur">1</a><a href="#">2</a><a href="#">3</a><a href="#">4</a></div>
     <table class="parts">
      <colgroup><col class="k1"><col class="k2"><col class="k3"></colgroup>
      <thead><tr><th><button class="all" aria-label="Toggle all"></button></th><th><label for="ds">Description</label><input id="ds" type="text" placeholder="Search"></th><th class="w"><label for="ms">Manufacturer</label><select id="ms"><option>All</option></select></th></tr></thead>
      <tbody>
       <tr class="sel"><td><input type="checkbox" checked aria-label="Select"></td><td>Fig. 7000, Flexible Coupling, Lightweight, Galv, E Gasket</td><td>Anvil</td></tr>
       <tr><td><input type="checkbox" aria-label="Select"></td><td>Fig. 7000, Flexible Coupling, Lightweight, Galv, Flush Gap, E Gasket</td><td>Anvil</td></tr>
       <tr><td><input type="checkbox" aria-label="Select"></td><td>Fig. 7000, Flexible Coupling, Lightweight, Org Pnt, E Gasket</td><td>Anvil</td></tr>
       <tr><td><input type="checkbox" aria-label="Select"></td><td>Fig. 7000, Flexible Coupling, Lightweight, Org Pnt, Flush Gap, E Gasket</td><td>Anvil</td></tr>
       <tr><td><input type="checkbox" aria-label="Select"></td><td>Fig. 7010, Rigid Coupling, Reducing, Galv, E Gasket</td><td>Anvil</td></tr>
       <tr class="cut"><td><input type="checkbox" aria-label="Select"></td><td>Fig. 7010, Rigid Coupling, Reducing, Org Pnt, E</td><td>Anvil</td></tr>
      </tbody>
     </table>
    </div></section>
   </div>
  </div>
 </section>

 <section class="symbols">
  <div class="phead"><span>Symbols</span><svg><use href="#pin"/></svg><svg><use href="#x"/></svg></div>
  <table class="list">
   <colgroup><col class="c100"><col class="c50"><col class="c50"><col></colgroup>
   <thead><tr><th>Name</th><th>Count</th><th>Eleme...</th><th></th></tr></thead>
   <tbody>
    <tr><td><span class="node"><svg class="sy"><use href="#sym"/></svg>Default Sym...</span></td><td>0</td><td>2</td><td></td></tr>
    <tr><td><span class="node"><svg class="sy"><use href="#sym"/></svg>Long-Eared ...</span></td><td>0</td><td>6</td><td></td></tr>
   </tbody>
  </table>
  <svg class="shape" viewBox="0 0 196 90"><path d="M0 27H74Q75 11 86 6Q98-1 109 6Q122 13 122 27H196M0 63H74Q78 81 86 85Q98 91 109 85Q120 80 122 63H196" fill="none" stroke="#000" stroke-width="4"/></svg>
 </section>

 <section class="doc">
  <div class="dtabs"><button>Start Page</button><button>Drawing1</button><button class="cur">Drawing2 <svg><use href="#x"/></svg></button><button>Complete Grid Wizard.cad</button></div>
  <div class="frame">
   <div class="canvas">
    <div class="paper">
     <svg class="dwg" viewBox="0 0 600 1200"><g fill="none" stroke-width="3">
      <path d="M175 40H180" stroke="#333"/><path d="M177 66V83" stroke="#f80"/><path d="M177 99V125" stroke="#f80" stroke-width="6"/>
      <path d="M173 148H181M175 180L181 188M178 210Q184 222 178 236" stroke="#777"/>
      <path d="M111 276H165M178 258L176 268L158 280M166 272L178 282V292" stroke="#444"/>
      <path d="M177 323V338M177 366V378" stroke="#000" stroke-width="6"/><path d="M175 405H180M168 442H186M177 442V452" stroke="#555"/>
      <path d="M147 477H160V505M207 477H194V505" stroke="#f80" stroke-width="5"/><path d="M156 505H198V522H156Z" fill="#f80" stroke="#f80"/><path d="M158 522V534Q160 552 177 552Q195 552 196 534V522M168 525V534H187V525" stroke="#e70" stroke-width="4"/>
      <path d="M168 580H186V600H168Z" fill="#f80" stroke="none"/><path d="M175 589H180M182 601H189" stroke="#e00"/><path d="M168 624H177" stroke="#00e" stroke-width="5"/>
      <path d="M102 680H136V675H218V678H270V694H218V700Q198 702 194 710H160Q156 702 136 700H102Z" fill="#e00" stroke="#900"/><path d="M103 677V707M269 669V702" stroke="#900"/><path d="M170 683H185V692H170Z" fill="#050" stroke="#0e2"/>
      <path d="M137 719L158 714V717H218V724H158V726Z" fill="#d00" stroke="none"/><circle cx="177" cy="735" r="12" stroke="#444" stroke-dasharray="8 3"/><circle cx="177" cy="735" r="8" fill="#111"/>
      <path d="M168 758V784M168 762L177 774" stroke="#000"/>
      <circle cx="177" cy="917" r="73" stroke="#ff3"/><circle cx="177" cy="880" r="36" stroke="#6f6"/><ellipse cx="177" cy="862" rx="30" ry="18" stroke="#8f8"/><path d="M132 845H222M132 881H222M177 820V930M147 845L207 880M207 845L147 880" stroke="#7e7"/>
      <path d="M176 770L112 903H144V1100M176 770L241 903H210V1066" stroke="#474"/>
      <path d="M210 1066H374V1035L504 1100L374 1165V1133H177" stroke="#944"/>
      <circle cx="177" cy="1100" r="33" fill="#fff" stroke="#999"/><path d="M177 1100V1067A33 33 0 0 0 144 1100ZM177 1100V1133A33 33 0 0 0 210 1100Z" fill="#000"/>
      <path d="M112 1100H243" stroke="#449"/><path d="M163 1048L190 1076" stroke="#222" stroke-width="4"/>
      <circle cx="177" cy="806" r="16" fill="#00e"/><path d="M177 900L188 912V924L177 935L166 924V912Z" fill="#e00"/><path d="M162 981L177 984V993L162 999Z" fill="#e00"/>
      <path d="M166 939V964M166 948H208" stroke="#000" stroke-width="5"/><path d="M166 948H208V970L190 962L200 976L184 968L176 956Z" fill="#000"/>
      <path d="M274 1058L289 1046V1114L299 1104M289 1114L284 1106" stroke="#e00" stroke-width="5"/>
      <text x="332" y="1052" transform="rotate(-47 332 1052)" class="sb2">SB-?</text></g></svg>
    </div>
    <div class="vscroll"><i></i></div>
   </div>
   <div class="hscroll"><i></i></div>
   <div class="sheets">
    <button class="nv" aria-label="First"><svg viewBox="0 0 12 12"><path d="M3 2V10"/><path d="M9 2V10L5 6Z"/></svg></button>
    <button class="nv" aria-label="Previous"><svg viewBox="0 0 12 12"><path d="M8 2V10L4 6Z"/></svg></button>
    <button class="nv" aria-label="Next"><svg viewBox="0 0 12 12"><path d="M4 2V10L8 6Z"/></svg></button>
    <button class="nv" aria-label="Last"><svg viewBox="0 0 12 12"><path d="M3 2V10L7 6Z"/><path d="M9 2V10"/></svg></button>
    <button class="sh cur">*Model</button><button class="sh two">*Sheet 1</button>
   </div>
  </div>
 </section>

 <section class="vbars">
  <div class="vbar"><i class="hgrip"></i>
   <button aria-label="Select line"><svg viewBox="0 0 34 32"><path d="M5 4L30 32" stroke="#999" stroke-dasharray="3 2"/><path d="M8 28V12H27" stroke="#00d"/><path d="M5 10H9V14H5ZM26 10H30V14H26Z" fill="#000" stroke="none"/><path d="M24 18V28L31 26Z" fill="#000"/></svg></button><hr>
   <button aria-label="Pick loop"><svg viewBox="0 0 34 32"><use href="#pick"/><path d="M12 11L9 8Q5 8 5 11Q5 14 9 14L16 8Q20 8 20 11Q20 14 16 14Z" stroke="#00e"/></svg></button><hr>
   <button aria-label="Pick valve"><svg viewBox="0 0 34 32"><use href="#pick"/><path d="M7 6L12 10H14L19 6V17L14 14H12L7 15Z" fill="#d00" stroke="#900"/></svg></button><hr>
   <button aria-label="Pick sprinkler"><svg viewBox="0 0 34 32"><use href="#pick"/><path d="M13 6V16M8 11H18M9 7L17 15M17 7L9 15" stroke="#d00"/></svg></button>
   <button aria-label="Pick upright"><svg viewBox="0 0 34 32"><use href="#pick"/><path d="M9 6H16M13 6V15M6 16Q7 14 12 14H15Q19 14 20 16" stroke="#e22"/></svg></button>
   <button aria-label="Pick pendent"><svg viewBox="0 0 34 32"><use href="#pick"/><path d="M6 8Q8 6 12 6H15Q19 6 20 8M13 6V16M9 17H16" stroke="#e22"/></svg></button><hr>
   <button aria-label="Pick pipe"><svg viewBox="0 0 34 32"><use href="#pick"/><path d="M7 7L17 15" stroke="#e11" stroke-width="6"/><path d="M9 7L16 12" stroke="#fcc"/><circle cx="18" cy="15" r="2" fill="#000" stroke="none"/></svg></button>
   <button aria-label="Pick outlet"><svg viewBox="0 0 34 32"><use href="#pick"/><path d="M5 8H20" stroke="#e22" stroke-width="4"/><path d="M13 11V16M10 16H16"/></svg></button>
   <button aria-label="Pick manifold"><svg viewBox="0 0 34 32"><use href="#pick"/><path d="M5 15H20" stroke="#e22" stroke-width="4"/><path d="M7 7V15M13 7V15M19 7V15" stroke="#e22"/></svg></button><hr>
   <button aria-label="Pick hose"><svg viewBox="0 0 34 32"><use href="#pick"/><path d="M8 5L12 8L16 5L20 8M8 8L12 5L16 8L20 5" stroke="#00e"/><path d="M6 14H17" stroke-width="4"/><path d="M12 14V19" stroke-width="3"/></svg></button>
   <button aria-label="Pick hanger"><svg viewBox="0 0 34 32"><use href="#pick"/><path d="M5 15H20" stroke="#e22" stroke-width="4"/><path d="M10 6H16M13 6V16M11 15H15"/></svg></button>
   <button aria-label="Pick branch"><svg viewBox="0 0 34 32"><use href="#pick"/><path d="M5 7H20" stroke="#e22" stroke-width="5"/><path d="M6 14H20M10 10L6 14L10 18"/></svg></button>
   <div class="vcap"><svg viewBox="0 0 14 12"><path d="M2 1V11"/><path d="M6 2V10L11 6Z" fill="#ddd"/></svg></div>
  </div>
  <div class="vbar short"><i class="hgrip"></i>
   <button aria-label="Arm"><svg viewBox="0 0 34 32"><path d="M1 15L27 4M13 8L28 14V26M24 30L28 25L32 30" stroke="#555" stroke-width="3"/></svg></button><hr>
   <button aria-label="Tee line"><svg viewBox="0 0 34 32"><path d="M1 16H28" stroke="#555" stroke-width="3"/><path d="M26 2H33V9H26ZM26 24H33V31H26Z" fill="#666" stroke="#555"/><path d="M29 8V24" stroke="#555" stroke-width="3"/></svg></button>
   <button aria-label="Peak"><svg viewBox="0 0 34 32"><path d="M1 23L17 8L33 23" stroke="#666" stroke-width="4"/><path d="M11 13L17 8L23 13" stroke="#222" stroke-width="4"/></svg></button><hr>
   <div class="vcap"><svg viewBox="0 0 14 12"><path d="M2 1V11"/><path d="M6 2V10L11 6Z" fill="#ddd"/></svg></div>
  </div>
 </section>
</main>

<footer>
 <div class="status"><span class="help">For Help, press F1</span><span>1103 selected</span><span></span><span></span><span>ø 2 (2.0670)</span><span># Off</span><span>Foot</span></div>
 <div class="barrow foot">
  <div class="bar"><i class="grip"></i>
   <button class="ib" aria-label="Angle snap"><svg viewBox="0 0 32 32"><path d="M3 27L27 5V22" stroke-dasharray="2 3"/><path d="M24 2L29 7M29 2L24 7M24 20L27 23L30 20" stroke-width="1.5"/><path d="M6 28H30" stroke="#f00" stroke-width="3"/><path d="M4 24L8 28L4 32L0 28Z" fill="#0dd"/></svg></button>
   <button class="ib on" aria-label="Center snap"><svg viewBox="0 0 32 32"><circle cx="16" cy="16" r="13"/><path d="M16 10V22M10 16H22" stroke="#e00" stroke-width="3"/></svg></button>
   <button class="ib on" aria-label="Endpoint snap"><svg viewBox="0 0 32 32"><path d="M5 27L26 6"/><circle cx="5" cy="27" r="4" stroke="#e00" stroke-width="3"/><circle cx="26" cy="6" r="4" stroke="#e00" stroke-width="3"/></svg></button>
   <button class="ib s" aria-label="Perpendicular"><svg viewBox="0 0 32 32"><path d="M1 2L7 8M7 1V7H2" stroke="#111" stroke-width="3"/><path d="M8 8L18 19" stroke="#088"/><path d="M12 10L17 7L21 12L17 16" stroke="#e00"/><path d="M9 31L28 10M9 20L17 21"/></svg></button>
   <button class="ib s" aria-label="Perpendicular point"><svg viewBox="0 0 32 32"><path d="M1 2L7 8M7 1V7H2" stroke="#111" stroke-width="3"/><path d="M8 8L16 17" stroke="#088"/><path d="M11 10L15 7L19 11L15 15" stroke="#e00"/><path d="M7 28L24 9"/><circle cx="28" cy="28" r="3" fill="#008" stroke="#008"/></svg></button>
   <button class="ib s" aria-label="Intersection"><svg viewBox="0 0 32 32"><path d="M2 2L30 28M28 2L3 29"/><path d="M11 11H19V19H11Z" stroke="#e00" stroke-width="3"/></svg></button>
   <button class="ib s" aria-label="Apparent intersection"><svg viewBox="0 0 32 32"><path d="M1 2L26 24M24 2L3 21"/><path d="M9 9H17V17H9Z" stroke="#e00" stroke-width="3"/><circle cx="28" cy="28" r="3" fill="#008" stroke="#008"/></svg></button>
   <button class="ib on" aria-label="Nearest"><svg viewBox="0 0 32 32"><path d="M6 2L18 30"/><circle cx="11" cy="16" r="4" stroke="#e00" stroke-width="3"/><path d="M24 5L29 10M29 5L24 10M18 13L21 10" stroke-width="1.5"/></svg></button>
   <button class="ib on" aria-label="Quadrant"><svg viewBox="0 0 32 32"><circle cx="16" cy="16" r="9"/><circle cx="16" cy="6" r="4"/><circle cx="5" cy="17" r="4"/><circle cx="16" cy="27" r="4"/><circle cx="27" cy="16" r="4"/><path d="M23 9H28V13M13 30H17" stroke="#dd0" stroke-width="4"/><path d="M16 12V20M12 16H20" stroke="#00e"/><path d="M18 20L22 22" stroke="#e00" stroke-width="3"/></svg></button>
   <i class="vs"></i>
   <button class="ib s" aria-label="Trace"><svg viewBox="0 0 32 32"><path d="M3 30L9 18L10 10L16 3L20 9L27 4" stroke-width="3"/><path d="M8 13L12 8" stroke="#e00"/><path d="M25 2H30V7H25Z" fill="#880" stroke="none"/></svg></button>
   <button class="ib on" aria-label="Snap"><svg viewBox="0 0 32 32"><use href="#magnet"/></svg></button>
   <button class="ib s" aria-label="Grid snap"><svg viewBox="0 0 32 32"><path d="M7 1V31M26 1V31M1 6H31M1 26H31"/><path d="M16 10V22M10 16H22" stroke="#e00"/></svg></button>
   <button class="cap" aria-label="More"><svg><use href="#more"/></svg></button></div>
  <div class="bar"><i class="grip"></i>
   <button class="ib" aria-label="Math"><svg viewBox="0 0 32 32"><path d="M7 3V13M2 8H12M19 8H29M3 20L11 28M11 20L3 28M19 24H29M24 19V21M24 27V29"/></svg></button>
   <button class="ib" aria-label="Apply"><svg viewBox="0 0 32 32"><path d="M6 11H14V6L24 15L14 24V19H6Z" fill="#000"/></svg></button>
   <input class="calc" type="text" aria-label="Value">
   <button class="cap" aria-label="More"><svg><use href="#more"/></svg></button></div>
 </div>
</footer>

<aside class="palette">
 <div class="palh"><span>View</span><svg viewBox="0 0 10 10"><path d="M0 3H10L5 8Z" fill="#555"/></svg><svg><use href="#x"/></svg></div>
 <div class="palg">
  <button class="ib s" aria-label="Isometric"><svg viewBox="0 0 32 32"><path d="M1 13L18 4L29 11L12 18ZM8 16L24 29L30 24L17 15M1 13L8 18" fill="#fff" stroke="#008"/><path d="M12 8L20 13" stroke="#008"/></svg></button>
  <button class="ib on s" aria-label="Plan"><svg viewBox="0 0 32 32"><path d="M3 4H29V27H3Z" fill="#fff" stroke="#008"/><path d="M9 4V9M14 4V13H10M9 13V17M21 4V18M14 18V13" stroke="#008"/></svg></button>
  <button class="ib s" aria-label="Zoom all"><svg viewBox="0 0 32 32"><path d="M3 3H12L9 6L13 10L10 13L6 9L3 12ZM29 3H20L23 6L19 10L22 13L26 9L29 12ZM3 29H12L9 26L13 22L10 19L6 23L3 20ZM29 29H20L23 26L19 22L22 19L26 23L29 20Z" fill="#fff" stroke-width="1.5"/></svg></button>
  <button class="ib s" aria-label="Zoom window"><svg viewBox="0 0 32 32"><path d="M3 3H26V22H3Z" stroke-dasharray="4 3"/><circle cx="22" cy="20" r="5" fill="#ddd"/><path d="M26 24L31 30" stroke-width="3"/></svg></button>
  <button class="ib s" aria-label="Zoom in"><svg viewBox="0 0 32 32"><circle cx="16" cy="11" r="9" fill="#ddd"/><path d="M22 19L30 27" stroke-width="4"/><path d="M10 28V19H4L13 8L22 19H16V28Z" fill="#fff"/></svg></button>
  <button class="ib s" aria-label="Zoom out"><svg viewBox="0 0 32 32"><circle cx="16" cy="11" r="9" fill="#ddd"/><path d="M22 19L30 27" stroke-width="4"/><path d="M10 8V17H4L12 30L20 17H15V8Z" fill="#fff"/></svg></button>
  <button class="ib" aria-label="Zoom selection"><svg viewBox="0 0 32 32"><path d="M3 3H29V29H3Z" stroke="#333" stroke-dasharray="4 3"/><path d="M9 23L22 9" stroke="#777" stroke-width="4"/><circle cx="23" cy="8" r="3" fill="#777" stroke="none"/></svg></button>
  <button class="ib s" aria-label="Previous view"><svg viewBox="0 0 32 32"><path d="M10 2H30V21H10Z" fill="#fff"/><path d="M14 6H24V15H14Z" fill="#00f"/><path d="M18 25H30M18 30H28"/><path d="M1 22L10 13V18H18V26H10V31Z" fill="#fff"/></svg></button>
  <button class="ib s" aria-label="Next view"><svg viewBox="0 0 32 32"><path d="M3 2H22V21H3Z" fill="#888" stroke="#222"/><path d="M7 6H17V15H7Z" fill="#666" stroke="#333"/><path d="M4 26H16" stroke="#222"/><path d="M30 22L21 13V18H13V26H21V31Z" fill="#888" stroke="#333"/></svg></button>
 </div>
</aside>
</body>
</html>
```
FILE: styles.css
```css
* { box-sizing: border-box; }
body {
  margin: 0;
  height: 100vh;
  display: flex;
  flex-direction: column;
  overflow: hidden;
  background: #525252;
  font: 11px/16px "Open Sans", "Noto Sans", sans-serif;
  color: #000;
}
button, input, select { font: inherit; color: inherit; }
button { margin: 0; padding: 0; border: 0; background: none; white-space: nowrap; }
a { color: inherit; text-decoration: none; }
i { font-style: normal; }
.defs { position: absolute; width: 0; height: 0; }

/* title and menu */
.titlebar { height: 23px; flex: none; background: #f0f3f9; display: flex; align-items: flex-start; padding-left: 3px; }
.appicon { width: 16px; height: 16px; flex: none; margin-top: 3px; }
.titlebar h1 { margin: 3px 0 0 5px; font-size: 12px; line-height: 18px; font-weight: 400; }
.winctl { margin-left: auto; display: flex; padding-right: 2px; }
.winctl button { width: 46px; height: 21px; }
.winctl svg { width: 11px; height: 11px; fill: none; stroke: #111; }
.menubar { height: 23px; flex: none; display: flex; align-items: center; padding-left: 2px; color: #fff; }
.menubar .appicon { margin: 0; }
.menubar button { padding: 0 8px 0 7px; height: 22px; }
.menubar .tucked { width: 163px; text-align: right; }
.menubar .mdictl { margin-left: auto; display: flex; padding-right: 2px; }
.menubar .mdictl button { width: 16px; padding: 0; }
.mdictl svg { width: 9px; height: 9px; fill: none; stroke: #a8b4c0; }

/* toolbars */
.bars { height: 152px; flex: none; }
.barrow { display: flex; height: 46px; align-items: flex-start; }
.bar {
  display: flex;
  height: 45px;
  align-items: stretch;
  border-radius: 2px;
  background: linear-gradient(#cfd2d7, #bdc1c8 45%, #8f97a3);
}
.bar.tall { height: 59px; }
.grip { width: 11px; flex: none; display: flex; justify-content: center; align-items: center; }
.grip::after { content: ""; width: 2px; height: 27px; background: repeating-linear-gradient(#333 0 2px, #eee 2px 4px); }
.ib { width: 44px; flex: none; display: flex; align-items: center; justify-content: center; }
.ib svg, .ltools svg { width: 32px; height: 32px; fill: none; stroke: #000; stroke-width: 2; overflow: visible; shape-rendering: crispEdges; }
.ib.s svg { filter: drop-shadow(2px 2px 0 #999b9f); }
.on { background: linear-gradient(#fdd9b4, #fdc68b 35%, #fdb05a 37%, #fee68c); box-shadow: inset 0 0 0 1px #e8c9a0; }
.tx { flex: none; text-align: left; padding-left: 4px; overflow: visible; }
.off { color: #8b8d90; }
.stack { display: flex; flex-direction: column; align-items: center; padding-top: 3px; margin: 2px 0; }
.stack svg { width: 32px; height: 32px; fill: none; stroke-width: 2; shape-rendering: crispEdges; }
.cap { width: 19px; margin-left: 2px; flex: none; background: linear-gradient(#9299a3, #4b535f); display: flex; align-items: flex-end; justify-content: center; padding-bottom: 2px; }
.cap.wide { margin-left: 3px; }
.bar.tall .cap, .w-134 + .cap, .w-82 + .cap { margin-left: 0; }
.cap svg { width: 12px; height: 14px; }
.icot { font: bold 14px "Liberation Sans", sans-serif; fill: #222; stroke: none; }
.icom { font: bold 15px "Liberation Mono", monospace; fill: #000; stroke: none; }
.icoa { font: bold 34px "Liberation Serif", serif; fill: #000; stroke: none; }
.w-34 { width: 34px; } .w-44 { width: 44px; } .w-48 { width: 48px; } .w-52 { width: 52px; } .w-56 { width: 56px; }
.w-68 { width: 68px; } .w-70 { width: 70px; } .w-74 { width: 74px; } .w-78 { width: 78px; } .w-80 { width: 80px; } .w-82 { width: 82px; }
.w-88 { width: 88px; } .w-90 { width: 90px; } .w-92 { width: 92px; } .w-98 { width: 98px; } .w-100 { width: 100px; }
.w-102 { width: 102px; } .w-104 { width: 104px; } .w-112 { width: 112px; } .w-124 { width: 124px; } .w-127 { width: 127px; }
.w-132 { width: 132px; } .w-134 { width: 134px; } .w-136 { width: 136px; } .w-144 { width: 144px; } .w-220 { width: 220px; }

/* docked panels */
.work { flex: 1; display: flex; min-height: 0; }
.phead { height: 20px; flex: none; display: flex; align-items: center; gap: 8px; padding: 0 6px 0 4px; background: #9fa19f; border-top: 1px solid #eee; color: #3a3a3a; }
.phead span { flex: 1; }
.phead svg { width: 9px; height: 10px; }
.leftdock { width: 388px; flex: none; display: flex; flex-direction: column; }
.layers { flex: 1; display: flex; flex-direction: column; }
.pbody { flex: 1; background: #fff; border: 3px solid #eaeaea; }
.ltools { height: 44px; display: flex; align-items: center; padding: 0 8px; gap: 12px; background: linear-gradient(#ced1d6, #9097a2); }
.ltools button { display: flex; }
.ltools .vs { margin: 0 -3px; }
.vs { width: 2px; height: 26px; flex: none; align-self: center; background: linear-gradient(90deg, #666 50%, #fff 50%); }
.list { width: 100%; table-layout: fixed; border-collapse: collapse; }
.list th { height: 19px; padding: 0 0 0 5px; text-align: left; font-weight: 400; background: linear-gradient(#fafafa, #ddd); border-right: 1px solid #bbb; border-bottom: 1px solid #aaa; white-space: nowrap; }
.list td { height: 17px; padding: 0; line-height: 15px; }
.list td:nth-last-child(2), .symbols td:nth-child(2) { padding-left: 4px; }
.c100 { width: 100px; } .c50 { width: 50px; } .c20 { width: 20px; } .c75 { width: 75px; }
.node { display: flex; align-items: center; gap: 3px; white-space: nowrap; }
.plus { width: 9px; height: 9px; margin: 0 2px 0 3px; border: 1px solid #777; line-height: 7px; font-size: 10px; text-align: center; }
.leaf { width: 7px; height: 9px; margin: -8px 0 0 7px; border: dotted #888; border-width: 0 0 1px 1px; }
.e { width: 16px; height: 12px; display: block; }
.m { width: 16px; height: 16px; display: block; }
.sw { display: block; width: 18px; height: 13px; background: #000; border: 1px solid #888; }
.sw.red { background: #f00; }
.ptabs { height: 23px; flex: none; display: flex; padding: 0 0 3px 4px; color: #fff; }
.ptabs button { padding: 0 7px; }
.ptabs .cur { background: linear-gradient(#cfd2d7, #fff); color: #000; padding: 0 3px; margin-right: 3px; border-radius: 0 0 4px 4px; }

/* parts picker */
.picker { width: 537px; margin-left: 4px; flex: none; display: flex; flex-direction: column; }
.pk { flex: 1; min-height: 0; background: #1b2135; padding: 10px 9px 10px 10px; color: #fff; font-size: 13px; display: flex; flex-direction: column; }
.pktop { display: flex; padding-left: 5px; }
.big { height: 32px; background: #008aee; border-radius: 4px; font-size: 22px; font-weight: 600; line-height: 30px; }
.big.sup { margin-left: auto; font-size: 18px; }
.dbl { width: 5px; height: 30px; margin: 1px 20px 0 19px; border: solid #3d4656; border-width: 0 1px; }
.cats { padding-top: 8px; color: #b5c3e6; font-weight: 600; }
.cats div { display: flex; height: 38px; }
.cats div:first-child { height: 40px; }
.cats a { padding: 0 12px 0 11px; margin-right: 1px; line-height: 40px; }
.cats div + div a { line-height: 38px; }
.cats .new, .cats .cur { color: #fff; }
.cats .cur { background: #030406; border-radius: 4px 4px 0 0; padding: 0 10px; margin: 0 3px 0 1px; }
.box { flex: 1; background: #030406; box-shadow: 0 0 5px #33415f; padding: 10px; display: flex; min-height: 0; }
.filters { width: 200px; flex: none; display: flex; flex-direction: column; }
.fh { display: flex; justify-content: space-between; padding-right: 10px; height: 34px; }
.fh h2 { margin: 0; font-size: 14px; line-height: 18px; font-weight: 600; }
.reset { height: 19px; width: 45px; border-radius: 3px; background: #008aee; font-size: 14px; font-weight: 600; line-height: 18px; }
input[type=text] { border: 1px solid #b9d3ee; border-radius: 2px; background: #fff; color: #333; outline: 0; }
input::placeholder { color: #a9a9a9; opacity: 1; }
.ftext { width: 190px; height: 32px; padding: 1px 10px 0; font-size: 14px; margin-bottom: 9px; }
.fscroll { display: flex; height: 421px; flex: none; border: solid #2b3a67; border-width: 1px 0; }
.fl { flex: 1; padding-right: 10px; }
.grp { display: flex; justify-content: space-between; width: 100%; height: 35px; align-items: center; padding-bottom: 2px; font-size: 10px; font-weight: 600; letter-spacing: 1px; color: #8cabdc; }
.grp span { margin-top: -6px; font-size: 13px; font-weight: 400; }
.mf { height: 236px; padding-bottom: 4px; margin: -2px 0 2px; display: flex; flex-direction: column; justify-content: space-between; font-size: 12px; }
.mf label, .ff label { display: flex; align-items: center; height: 20px; }
.mf b { margin: 1px 0 0 5px; padding: 0 4px; border-radius: 7px; background: #265a85; font-size: 10px; line-height: 13px; }
input[type=checkbox] { appearance: none; width: 13px; height: 13px; margin: 0; background: #fff; border: 1px solid #777; display: block; flex: none; }
input[type=checkbox]:checked { background: #fff url("data:image/svg+xml,%3Csvg xmlns='http://www.w3.org/2000/svg' viewBox='0 0 11 11'%3E%3Cpath d='M1.5 5L4.5 8.5L10 1.5' fill='none' stroke='%23000' stroke-width='2'/%3E%3C/svg%3E") center/11px; }
label input[type=checkbox] { margin: 0 8px 4px 0; }
.sb { width: 17px; background: #f0f0f0; display: flex; flex-direction: column; align-items: center; padding: 17px 0; }
.sb svg { width: 12px; height: 8px; fill: none; stroke: #555; stroke-width: 3; }
.sb i { width: 15px; height: 300px; margin: 9px 0 auto; background: #cdcdcd; }
.ff { padding-top: 4px; color: #3fa2f5; }
.ff label { height: 26px; }
.results { flex: 1; min-width: 0; border: 1px solid #26345c; border-right: 0; border-radius: 4px 0 0 4px; background: #1b2135; overflow: hidden; }
.clip { padding: 10px 0 0 10px; width: 298px; overflow: hidden; }
.rpp { display: flex; align-items: center; gap: 7px; padding-left: 15px; font-size: 16px; line-height: 28px; }
.rpp input { width: 58px; height: 31px; padding: 0 10px; font-size: 14px; }
.pages { display: flex; gap: 22px; padding-left: 130px; margin: 35px 0 10px; height: 29px; line-height: 29px; font-size: 18px; color: #7fa3d8; }
.pages .dim { color: #52678f; width: 8px; margin-left: -1px; font-size: 22px; line-height: 26px; }
.pages .cur { color: #3b97f0; }
.parts { width: 330px; table-layout: fixed; border-collapse: collapse; line-height: 19px; }
.k1 { width: 39px; } .k2 { width: 174px; } .k3 { width: 117px; }
.parts th { height: 73px; padding: 0; background: #232c4c; border-bottom: 2px solid #2b3a67; text-align: left; vertical-align: top; font-weight: 600; color: #b5c3e6; }
.parts th.w { color: #fff; }
.parts th label { display: block; line-height: 19px; padding: 6px 0 7px; }
.parts th input { width: 131px; height: 31px; padding: 0 10px; font-size: 14px; font-weight: 400; display: block; }
.parts select { width: 90px; height: 32px; padding: 0 13px; border: 0; border-radius: 2px; font-size: 14px; font-weight: 400; color: #444; appearance: none; background: #fff url("data:image/svg+xml,%3Csvg xmlns='http://www.w3.org/2000/svg' viewBox='0 0 12 8'%3E%3Cpath d='M1 1L6 6L11 1' fill='none' stroke='%23000' stroke-width='2'/%3E%3C/svg%3E") 56px 12px/12px 8px no-repeat; display: block; }
.all { width: 24px; height: 24px; margin: 38px 0 0 5px; display: block; background: #333; border: 4px solid #dde0d8; border-bottom-color: #aab5a0; }
.parts td { padding: 5px 12px 4px 0; font-weight: 400; }
.parts td:first-child { padding: 0 0 0 11px; }
.parts td:last-child { font-weight: 600; }
.parts .sel td { background: #255388; }
.parts .cut td { height: 64px; }
.parts .cut td:nth-child(2) { vertical-align: top; }

/* symbols */
.symbols { width: 213px; margin-left: 5px; flex: none; background: #fff; display: flex; flex-direction: column; }
.sy { width: 15px; height: 15px; margin-left: 2px; }
.shape { margin: auto 8px 2px 9px; width: 196px; height: 90px; }

/* drawing window */
.doc { flex: 1; margin-left: 4px; display: flex; flex-direction: column; min-width: 0; }
.dtabs { height: 20px; flex: none; display: flex; align-items: flex-end; padding-left: 2px; color: #fff; }
.dtabs button { padding: 0 7px; height: 18px; }
.dtabs .cur { background: linear-gradient(#c4c8cf, #fff); color: #000; font-weight: 700; border: 2px solid #e9b75c; border-bottom: 0; border-radius: 5px 5px 0 0; padding: 0 3px; line-height: 14px; }
.dtabs svg { width: 8px; height: 8px; margin-left: 7px; }
.frame { flex: 1; min-height: 0; display: flex; flex-direction: column; border: 4px solid #ececec; outline: 1px solid #bbb; outline-offset: -3px; box-shadow: inset 2px 2px 0 #777; padding: 2px 2px 1px; }
.canvas { flex: 1; min-height: 0; display: flex; }
.paper { flex: 1; background: #fff; }
.dwg { display: block; width: 200px; height: 400px; margin: -4px 0 0 263px; }
.sb2 { font: bold 42px "Liberation Sans", sans-serif; fill: #e00; stroke: none; }
.vscroll { width: 16px; background: #f0f0f0; padding: 638px 0 0 7px; }
.vscroll i { display: block; width: 2px; height: 17px; background: #858585; }
.hscroll { height: 16px; flex: none; background: #f0f0f0; padding: 7px 0 0 167px; }
.hscroll i { display: block; width: 17px; height: 2px; background: #858585; }
.sheets { height: 19px; flex: none; display: flex; gap: 3px; background: linear-gradient(#505050, #757575 5px); padding: 3px 0 0 1px; }
.nv { width: 13px; height: 13px; background: #eee; }
.nv svg { width: 11px; height: 11px; display: block; margin: auto; fill: #444; stroke: #444; }
.sh { height: 17px; margin-top: -2px; line-height: 14px; }
.sh.cur { margin-left: 4px; width: 61px; padding-right: 10px; font-weight: 700; background: #fff; clip-path: polygon(0 0, 100% 0, 44px 100%, 0 100%); }
.sh.two { margin-left: -16px; width: 70px; padding-right: 4px; background: #ccd5de; clip-path: polygon(16px 0, 100% 0, 54px 100%, 0 100%); }

/* vertical toolbars */
.vbars { display: flex; gap: 1px; width: 96px; flex: none; align-items: flex-start; }
.vbar { width: 47px; background: linear-gradient(90deg, #cfd2d7, #bdc1c8 40%, #8f97a3); border-radius: 3px; }
.hgrip { display: block; height: 10px; padding: 4px 8px; }
.hgrip::after { content: ""; display: block; height: 2px; background: repeating-linear-gradient(90deg, #222 0 2px, #eee 2px 4px); }
.vbar button { display: flex; width: 100%; height: 42px; align-items: center; justify-content: center; }
.vbar button svg { width: 34px; height: 32px; fill: none; stroke: #000; stroke-width: 2; shape-rendering: crispEdges; }
.vbar hr { margin: 3px 9px; border: 0; height: 2px; background: linear-gradient(#555 50%, #fff 50%); }
.vcap { height: 21px; background: linear-gradient(90deg, #4b535f, #9299a3); display: flex; justify-content: flex-end; align-items: center; padding-right: 3px; margin-top: 2px; }
.vcap svg { width: 14px; height: 12px; stroke: #ddd; fill: none; }

/* status and bottom toolbar */
footer { flex: none; }
.status { height: 19px; display: flex; color: #fff; background: linear-gradient(#3e424e 0 8px, #2e2e2e 8px); padding: 3px 96px 0 4px; }
.status span { padding: 0 2px 0 4px; border-left: 1px solid #777; }
.status .help { border: 0; padding: 0; flex: 1; }
.foot { gap: 1px; }
.foot .vs { margin: 0 2px; }
.foot .bar { height: 46px; }
.calc { width: 60px; height: 15px; align-self: center; margin: 0 6px 0 1px; border: 0; }

/* floating view palette */
.palette { position: absolute; left: 23px; top: 23px; width: 141px; height: 167px; border: 2px solid #7d7d7d; outline: 1px solid #fff; outline-offset: -3px; background: linear-gradient(#cfd2d7, #8f97a3); padding: 1px; }
.palh { height: 23px; display: flex; align-items: center; gap: 10px; padding: 0 3px 0 2px; background: #9fa19f; color: #444; font-weight: 600; }
.palh span { flex: 1; }
.palh svg { width: 9px; height: 9px; }
.palg { display: grid; grid-template-columns: repeat(3, 44px); grid-auto-rows: 41px; row-gap: 5px; padding: 1px 0 0 1px; }
```
